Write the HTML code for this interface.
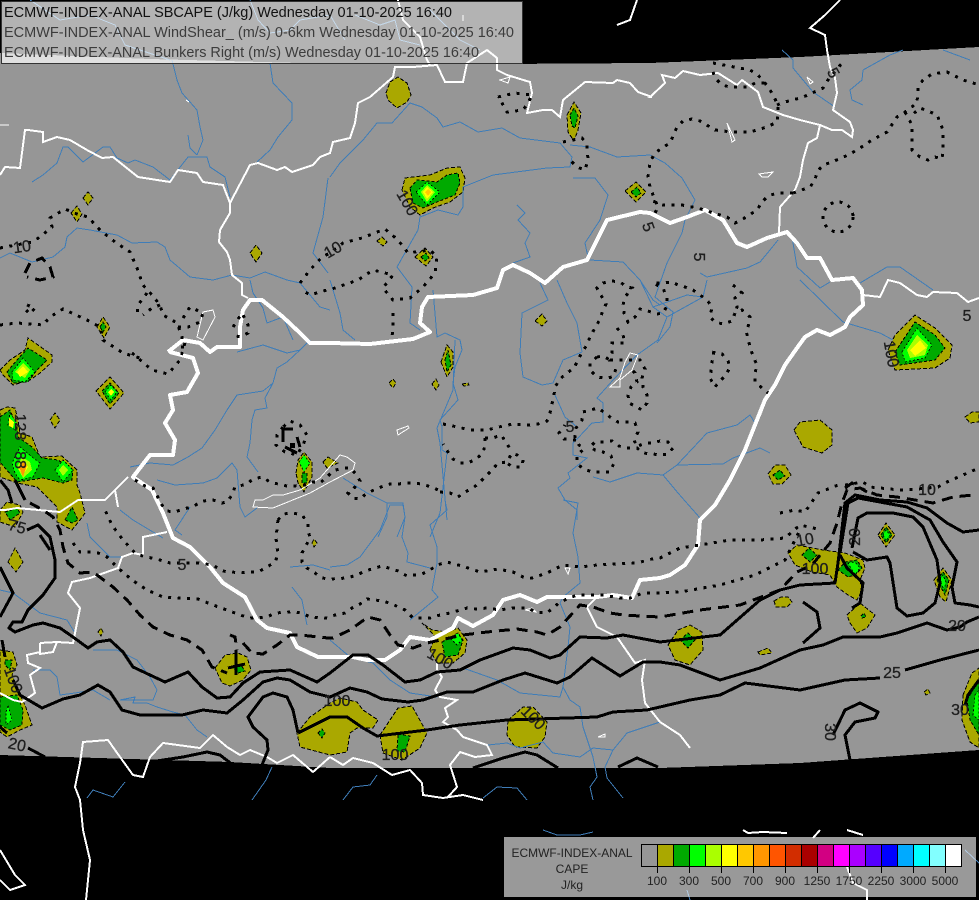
<!DOCTYPE html>
<html><head><meta charset="utf-8"><title>ECMWF-INDEX-ANAL SBCAPE</title>
<style>
html,body{margin:0;padding:0;background:#000}
svg{display:block;font-family:"Liberation Sans",sans-serif}
.r polyline{fill:none;stroke:#3f7db8;stroke-width:1}
.w polyline{fill:none;stroke:#fff;stroke-width:2}
.l polyline,.l polygon{fill:none;stroke:#fff;stroke-width:1}
.h polyline{fill:none;stroke:#fff;stroke-width:4;stroke-linejoin:round}
.d polyline{fill:none;stroke:#000;stroke-width:3;stroke-dasharray:3 6.5}
.k polyline{fill:none;stroke:#000;stroke-width:3;stroke-dasharray:11 7}
.s polyline{fill:none;stroke:#000;stroke-width:3;stroke-linejoin:round}
.o{fill:#aaa800;stroke:#000;stroke-width:1;stroke-dasharray:4 2}
.g{fill:#00aa00;stroke:#000;stroke-width:1;stroke-dasharray:3 2}
.b{fill:#00ff00;stroke:#000;stroke-width:.8;stroke-dasharray:2 2}
.m{fill:#aaff00}.y{fill:#ffff00}.a{fill:#ffc800}.n{fill:#ff9600}
.t text{font-size:16px;fill:#1e1e1e;stroke:#1e1e1e;stroke-width:.3;text-anchor:middle}
</style></head><body>
<svg width="979" height="900" viewBox="0 0 979 900" xmlns="http://www.w3.org/2000/svg" shape-rendering="crispEdges">
<rect width="979" height="900" fill="#000"/>
<polygon fill="#969696" points="0,53 150,59 300,63 500,64 650,63 800,57 979,47 979,750 800,763 660,768 330,768 230,762 0,755"/>

<!-- CAPE fills -->
<g>
<polygon class="o" points="386,93 390,82 398,77 407,83 411,95 407,102 397,108 388,100"/>
<polygon class="o" points="402,190 405,178 430,175 447,168 460,167 465,178 463,192 450,202 433,208 420,215 410,207"/>
<polygon class="g" points="410,188 417,180 437,182 447,175 458,173 460,183 455,195 437,202 423,208 413,203"/>
<polygon class="b" points="416,192 427,182 440,192 427,205"/>
<polygon class="m" points="421,192 427,185 435,192 427,202"/>
<polygon class="y" points="423,192 427,187 433,192 427,199"/>
<polygon class="a" points="425,192 428,189 431,192 428,196"/>
<polygon class="o" points="567,115 574,102 581,113 578,130 574,141 568,132"/>
<polygon class="g" points="570,115 574,108 578,116 575,128 572,126"/>
<polygon class="o" points="625,191 636,182 646,192 636,202"/>
<polygon class="g" points="631,192 637,187 641,193 636,197"/>
<polygon class="o" points="250,253 256,245 262,253 256,262"/>
<polygon class="o" points="415,257 425,248 433,257 426,266"/>
<polygon class="g" points="421,257 426,253 429,258 425,261"/>
<polygon class="o" points="377,241 382,237 387,242 383,246"/>
<polygon class="o" points="83,198 88,192 93,198 88,205"/>
<polygon class="o" points="71,213 77,206 82,214 77,222"/>
<polygon class="o" points="97,327 103,317 110,327 104,338"/>
<polygon class="g" points="100,327 103,322 106,327 103,332"/>
<polygon class="o" points="0,370 10,360 25,350 28,338 38,345 52,355 52,362 40,373 30,380 13,385 3,375"/>
<polygon class="g" points="7,372 17,360 28,348 47,360 37,370 28,382 13,383"/>
<polygon class="b" points="12,372 23,358 35,372 25,382 13,380"/>
<polygon class="m" points="15,372 23,363 30,370 25,378"/>
<polygon class="y" points="17,372 23,366 28,372 20,377"/>
<polygon class="o" points="96,391 110,377 124,393 110,409"/>
<polygon class="g" points="102,391 110,383 119,393 110,404"/>
<polygon class="b" points="105,392 111,385 117,392 111,400"/>
<polygon class="y" points="108,392 111,389 114,392 111,396"/>
<polygon class="o" points="0,410 7,407 15,408 18,420 20,433 32,437 40,457 62,456 77,470 77,485 80,493 85,513 80,520 72,530 57,522 57,507 37,487 17,483 0,477"/>
<polygon class="g" points="0,417 10,410 17,427 18,437 32,447 42,458 58,460 73,470 72,480 63,483 43,478 17,482 0,462"/>
<polygon class="b" points="10,413 17,423 15,430 8,425"/>
<polygon class="y" points="9,418 14,422 13,428 9,426"/>
<polygon class="b" points="15,473 12,463 20,447 32,457 40,463 33,477 20,480"/>
<polygon class="m" points="17,467 22,457 30,462 32,470 23,478"/>
<polygon class="y" points="18,468 23,462 28,467 23,475"/>
<polygon class="n" points="19,467 23,462 27,465 23,477"/>
<polygon class="b" points="55,470 63,460 73,470 63,482"/>
<polygon class="m" points="59,470 63,465 68,470 63,476"/>
<polygon class="g" points="65,520 72,507 78,520 72,523"/>
<polygon class="o" points="0,510 7,502 20,505 23,512 15,527 0,522"/>
<polygon class="g" points="5,512 17,508 20,513 10,520"/>
<polygon class="o" points="8,562 15,548 23,562 16,572"/>
<polygon class="o" points="0,650 13,652 17,665 12,675 20,695 25,705 32,725 20,730 7,737 0,732"/>
<polygon class="g" points="0,697 17,695 23,710 22,725 10,730 0,725"/>
<polygon class="b" points="6,712 8,705 12,720 6,725"/>
<polygon class="g" points="5,660 12,660 10,670 5,665"/>
<polygon class="o" points="215,668 225,655 238,653 247,657 251,670 243,680 230,686 222,683"/>
<polygon class="g" points="233,668 241,665 245,671 238,673"/>
<polygon class="o" points="297,733 310,717 330,703 340,698 357,702 363,710 378,720 373,728 357,728 350,733 347,752 330,755 300,747"/>
<polygon class="g" points="318,733 322,729 325,733 322,738"/>
<polygon class="o" points="380,735 398,708 412,706 427,733 420,748 402,760 383,753"/>
<polygon class="g" points="398,734 410,736 405,752 397,751"/>
<polygon class="o" points="508,720 523,707 533,707 547,722 545,737 537,748 515,747 507,735"/>
<polygon class="o" points="430,650 435,637 432,633 422,623 432,630 447,632 458,628 467,640 465,653 453,663 437,663"/>
<polygon class="g" points="442,642 458,633 463,640 458,655 445,657"/>
<polygon class="b" points="450,638 458,633 462,640 457,645"/>
<polygon class="o" points="794,430 800,422 820,420 832,430 832,445 822,453 803,447"/>
<polygon class="o" points="768,474 775,465 785,465 791,475 782,484 773,484"/>
<polygon class="g" points="773,475 780,470 785,476 778,480"/>
<polygon class="o" points="788,553 797,545 823,550 845,553 863,560 865,568 860,580 862,590 857,600 848,595 837,587 830,575 812,572 795,565"/>
<polygon class="g" points="802,555 809,548 817,555 810,562"/>
<polygon class="g" points="838,570 845,562 857,560 862,568 855,575 848,577"/>
<polygon class="b" points="848,563 855,562 860,568 855,575"/>
<polygon class="o" points="847,615 860,603 875,615 867,628 857,633 850,623"/>
<polygon class="g" points="861,616 864,613 866,617 862,618"/>
<polygon class="o" points="774,601 781,597 788,597 792,602 787,607 776,607"/>
<polygon class="o" points="878,535 886,523 895,535 886,547"/>
<polygon class="g" points="881,535 886,527 892,535 886,543"/>
<polygon class="b" points="883,535 886,530 890,535 886,541"/>
<polygon class="o" points="934,580 943,568 952,580 946,602 940,597"/>
<polygon class="g" points="937,580 943,572 949,580 945,595"/>
<polygon class="b" points="940,580 943,575 946,582 944,590"/>
<polygon class="o" points="668,645 678,630 690,625 702,632 703,650 690,665 675,660"/>
<polygon class="g" points="680,640 688,633 695,640 688,648"/>
<polygon class="o" points="888,350 895,335 915,315 935,328 952,345 950,358 935,368 895,370"/>
<polygon class="g" points="895,352 915,322 935,335 945,348 935,360 900,365"/>
<polygon class="b" points="902,352 917,328 932,345 925,358 905,362"/>
<polygon class="m" points="907,350 917,335 928,345 925,355 910,358"/>
<polygon class="y" points="910,350 920,340 926,348 915,356"/>
<polygon class="o" points="963,695 972,673 979,668 979,748 970,742 962,720"/>
<polygon class="g" points="967,700 979,680 979,735 970,720"/>
<polygon class="b" points="975,695 979,690 979,720 973,715"/>
<polygon class="o" points="535,321 542,314 547,321 542,326"/>
<polygon class="o" points="441,362 447,345 453,352 453,367 447,377"/>
<polygon class="g" points="445,360 448,350 451,365 447,372"/>
<polygon class="o" points="389,383 393,379 396,383 393,388"/>
<polygon class="o" points="432,384 436,379 439,385 436,390"/>
<polygon class="o" points="462,384 468,383 469,385 464,386"/>
<polygon class="o" points="296,473 298,460 304,452 312,462 312,477 304,492 298,483"/>
<polygon class="b" points="299,462 304,455 310,463 304,472"/>
<polygon class="g" points="302,473 307,473 307,483 302,483"/>
<polygon class="o" points="323,462 328,457 338,463 327,468"/>
<polygon class="o" points="312,543 314,539 317,543 314,547"/>
<polygon class="o" points="98,632 101,628 103,632 101,636"/>
<polygon class="o" points="50,420 55,413 60,420 55,428"/>
<polygon class="o" points="965,417 972,412 979,412 979,422 970,423"/>
<polygon class="o" points="758,652 768,648 772,653 760,655"/>
<polygon class="o" points="924,692 928,689 930,693 926,695"/>
</g>

<!-- rivers -->
<g class="r">
<polyline points="172,60 177,80 182,93 197,110 200,127 203,140 197,155"/>
<polyline points="188,135 190,148 197,155"/>
<polyline points="270,63 273,83 292,103 292,120 278,137 270,150 257,162"/>
<polyline points="32,182 43,175 57,163 63,147 68,147 83,162 103,147 110,147 117,158 128,163 135,160 153,167 170,180 188,157 207,157 210,167 225,177 230,197"/>
<polyline points="0,258 10,253 32,262 53,257 65,247 67,237 77,228 90,230 117,235 132,243 157,242 165,247 170,260 190,277 213,280 232,275 250,278 265,272 287,280 300,283 320,307 330,310"/>
<polyline points="250,280 253,293 263,308 267,323 283,317 293,340"/>
<polyline points="237,352 263,345 287,353 300,350 310,340"/>
<polyline points="328,178 323,217 313,253 328,273"/>
<polyline points="330,177 340,163 363,140 377,123 392,123 410,103 422,107 437,118 443,127 460,122 478,132 502,128 520,138 560,143 572,157 570,167 547,168 493,175 463,187 463,207 458,215 438,210 420,217 418,230 397,267 412,287 410,323 420,330"/>
<polyline points="570,145 590,147 617,157 650,155 665,163 682,178 695,200 685,220 682,233 667,263 655,297 673,312 670,327 657,343"/>
<polyline points="573,178 595,178 608,195 600,220 585,243 588,257"/>
<polyline points="517,205 525,213 518,220 530,233 525,243 530,257 513,263"/>
<polyline points="590,260 623,262 640,280 653,300 660,305"/>
<polyline points="540,283 548,300 522,313 520,353 523,377 542,385 553,383 563,360 582,352"/>
<polyline points="557,280 567,303 577,323 582,352"/>
<polyline points="330,280 340,313 343,330 355,340"/>
<polyline points="433,290 437,337 445,333 460,340 462,350 455,367 453,383 458,400 440,420 442,427 442,450 447,453 440,513 430,537"/>
<polyline points="455,340 453,390 437,428 440,443 447,520"/>
<polyline points="707,280 703,297 667,317 658,340 637,355 613,380 597,398 603,403 603,422 592,423 578,438 573,443 573,455 587,458 568,473 570,478 558,488 565,500 577,510 577,520"/>
<polyline points="555,395 565,417 577,427"/>
<polyline points="640,280 653,307 667,317"/>
<polyline points="653,307 687,295 703,297"/>
<polyline points="593,477 610,482 637,473 663,475 677,465 707,433 737,425 750,415 755,423"/>
<polyline points="663,475 678,493 700,518"/>
<polyline points="677,465 723,464 733,458 760,448 770,453"/>
<polyline points="700,273 707,277 747,268 760,262 770,250 778,240"/>
<polyline points="792,237 797,267 820,288 830,282"/>
<polyline points="800,280 843,322 880,333 893,340"/>
<polyline points="860,283 887,267 900,267 933,290"/>
<polyline points="782,50 793,60 793,68 813,92 835,107"/>
<polyline points="863,70 862,80 850,90 852,100 863,105"/>
<polyline points="863,70 890,55 903,50"/>
<polyline points="943,50 970,60"/>
<polyline points="120,510 133,520 163,538"/>
<polyline points="87,523 90,537 110,557 123,557"/>
<polyline points="0,590 13,593 40,613 67,620 75,633"/>
<polyline points="93,650 117,650 137,660 150,677 157,690 153,700 120,700 135,697 133,703 147,703 157,707 173,712 185,715 197,730 207,737"/>
<polyline points="33,670 50,670 57,677 60,695 75,693 93,690 110,700"/>
<polyline points="125,782 113,797 93,790 87,798"/>
<polyline points="272,767 266,780 252,800"/>
<polyline points="292,587 302,600 307,625"/>
<polyline points="290,567 313,565 330,570"/>
<polyline points="190,507 175,530 182,535"/>
<polyline points="173,465 188,457 202,448 215,430 227,410 237,395 263,391 273,383"/>
<polyline points="130,467 150,463 173,465"/>
<polyline points="287,362 277,368 273,383 265,398 267,408 255,410 252,420 250,443 247,457 258,472"/>
<polyline points="300,350 287,362"/>
<polyline points="157,480 175,485 203,483 217,478 232,463 237,470 240,507 245,517 257,508"/>
<polyline points="343,478 367,493 387,503 403,503 405,517 397,537"/>
<polyline points="387,503 387,517 378,537"/>
<polyline points="330,567 347,565 360,557 380,530 390,505 403,505 405,517 402,537 408,553 407,562 430,568"/>
<polyline points="445,500 447,510 430,525 437,547 437,563 432,590 438,597 410,620"/>
<polyline points="563,500 578,503 573,533 578,557 580,583 563,597 560,603 570,627 568,647 563,687 570,700 580,707 583,727 593,757 597,777 590,787 593,800"/>
<polyline points="330,640 350,657 373,663 390,680 410,693 437,697"/>
<polyline points="463,668 497,680 520,693 560,697 563,687"/>
<polyline points="488,745 507,743 520,748 543,742 553,753 580,757 593,748 613,750 627,733 660,722"/>
<polyline points="613,750 605,767 607,778 623,798"/>
<polyline points="343,800 353,787 370,785 377,775"/>
<polyline points="483,798 497,787 517,788 527,800"/>
<polyline points="543,830 557,835 567,835 580,835 593,832"/>
<polyline points="965,850 979,863"/>
<polyline points="687,890 690,900"/>
<polyline points="250,0 258,20 270,33 290,30 300,20 330,15 345,40"/>
<polyline points="30,0 60,20 90,15 115,25 125,45 170,60"/>
<polyline points="355,15 380,25 395,20 400,40 420,45"/>
<polyline points="430,10 460,40 480,50"/>
</g>

<!-- lakes / thin -->
<g class="l">
<polygon points="253,507 255,500 263,500 273,495 283,495 300,490 320,478 340,455 347,457 355,463 353,470 330,482 310,493 273,508"/>
<polygon points="397,430 408,426 409,428 398,435"/>
<polygon points="203,312 213,310 215,317 203,340 197,337"/>
<polygon points="727,123 735,140 732,142 729,130"/>
<polygon points="759,174 773,172 768,177 762,177"/>
<polygon points="807,77 813,82 810,84"/>
<polygon points="610,387 620,378 625,362 630,353 638,355 632,370 620,380 620,387"/>
<polygon points="565,568 570,568 568,574"/>
<polygon points="525,610 532,608 536,612"/>
<polygon points="598,737 605,734 605,737"/>
<polygon points="500,80 510,77 508,83"/>
<polyline points="0,125 9,125"/>
<polyline points="463,15 463,21"/>
<polyline points="186,100 189,102"/>
</g>

<!-- thin borders -->
<g class="w">
<polyline points="0,175 5,167 20,168 25,130 28,130 43,132 43,142 57,137 70,140 87,150 102,158 113,157 138,177 170,182 178,170 197,173 203,182 223,185 230,203 250,165 258,163 277,170 285,167 292,172 313,165 320,157 330,153 333,142 350,138 355,123 358,103 370,97 393,77 395,67 413,67 437,65 445,82 463,82 467,63 487,50 497,58 497,70 507,75 530,82 532,93 527,113 543,110 552,110 560,117 563,100 585,82 613,83 617,80 630,83 638,92 652,97 650,97 665,83 662,75 675,78 683,71 700,75 718,73 737,85 742,80 758,92 763,107 783,115 800,120 820,125 832,130 842,130 852,137 853,130 850,122 833,110 837,93 835,78 830,67 827,50 825,35 810,28 825,15 840,0"/>
<polyline points="398,0 403,20 420,37 427,60 430,65"/>
<polyline points="230,203 230,213 220,230 219,242 227,252 230,260 232,275 242,283 242,295 248,298"/>
<polyline points="820,125 817,138 808,143 803,160 800,177 795,190 780,207 779,233"/>
<polyline points="863,295 880,297 888,280 900,283 917,295 927,297 933,292 957,293 968,302 979,298"/>
<polyline points="597,597 587,607 597,627 617,637 635,663 645,660 642,680 645,703 660,722 680,735 690,748"/>
<polyline points="437,663 437,670 442,677 435,690 440,697 457,700 445,708 448,717 443,722 457,730 463,737 487,745 492,755 475,757 460,752 450,765 457,787 447,798"/>
<polyline points="330,757 343,765 353,758 373,763 392,775 410,770 422,783 423,795 443,798 463,795 483,800"/>
<polyline points="330,757 313,772 293,755 277,763 267,757 250,750 240,755 227,747 213,735 200,748 163,743 150,757 143,777 133,775 115,750 108,740 83,742 80,763 75,787 80,800 83,830 90,860 86,900"/>
<polyline points="0,510 5,510 17,508 60,512 78,500 105,500 115,490 128,477"/>
<polyline points="115,490 118,507"/>
<polyline points="167,532 143,537 143,555 133,553 122,557 118,568 90,578 72,582 68,593 80,608 75,633 73,643 57,642"/>
<polyline points="40,652 27,655 28,663 40,668 30,675 35,693 22,702 13,700 0,693"/>
<polyline points="40,643 57,642 53,652 40,654 40,643"/>
<polyline points="743,830 748,833 763,832 787,833"/>
<polyline points="820,830 813,838"/>
<polyline points="847,830 863,835"/>
<polyline points="847,867 853,883 867,890 867,900"/>
<polyline points="617,25 630,20 637,0"/>
<polyline points="0,850 15,875 25,885 10,890 0,880"/>
</g>

<!-- Hungary -->
<g class="h">
<polyline points="168,352 183,340 200,343 210,352 217,347 240,347 240,327 243,310 250,300 262,300 283,317 300,333 310,343 330,343 370,344 413,339 430,332 420,323 422,307 428,297 473,295 497,288 503,270 513,265 530,273 545,283 563,267 587,260 597,240 607,220 640,212 650,213 670,223 687,217 705,210 723,220 737,243 747,247 767,238 787,232 797,243 807,258 820,258 832,280 853,278 862,290 863,305 850,317 845,327 830,335 817,330 805,337 797,348 785,365 775,385 765,400 755,425 745,450 730,480 715,505 700,520 698,545 685,565 670,575 660,578 640,580 632,598 613,595 597,597 567,597 547,597 537,602 520,595 503,600 493,615 473,626 458,618 453,628 430,640 410,637 400,650 385,660 367,660 353,657 330,657 318,657 297,647 290,633 267,628 257,620 245,597 223,583 210,567 190,547 173,538 163,513 152,490 133,477 150,455 173,455 175,440 165,423 173,410 170,395 187,392 198,373 193,358 170,352"/>
</g>

<!-- dotted -->
<g class="d">
<polyline points="0,248 32,242 40,237 52,227 50,218 65,209 77,214 88,217 100,230 115,242 130,252 137,268 143,285 152,295 160,305 163,315 177,323 182,337 183,353"/>
<polyline points="0,325 17,323 43,325 50,317 63,309 87,320 100,327 103,340 123,353 140,358"/>
<polyline points="132,353 152,370 168,374 180,360 185,343"/>
<polyline points="27,305 35,308 30,314 25,309"/>
<polyline points="147,293 138,305 137,317"/>
<polyline points="160,305 152,308 143,315"/>
<polyline points="183,318 190,307 203,313 200,322 188,327 177,327"/>
<polyline points="233,327 242,313 248,325 248,333 240,337 233,335"/>
<polyline points="300,283 310,270 322,257 330,253 343,243 362,238 385,229 398,240 408,253 430,250 437,257 435,273 423,287 410,298 393,300 383,288 393,275 373,270 358,280 335,288 327,290 310,295 302,290"/>
<polyline points="393,313 393,327 392,337"/>
<polyline points="498,97 515,93 532,95 528,103 523,110 507,112 502,103 498,97"/>
<polyline points="563,142 582,138 587,145 588,160 585,170 577,167 570,160"/>
<polyline points="713,63 750,70 758,75 765,83 772,93 778,105 778,113 777,122 767,127 750,132 732,132 715,130 700,121 692,119 683,121 677,127 670,143 662,148 655,153 650,162 648,177 650,187 655,200 658,207 653,217"/>
<polyline points="713,72 715,78 722,85 730,87 740,87 748,87 755,83 765,83"/>
<polyline points="777,105 785,102 800,98 808,95 823,88 828,80 842,63"/>
<polyline points="793,193 777,193 768,196 762,202 757,210 743,219 735,223 727,217 713,213 705,210 692,207 682,205 672,205 663,205 650,200"/>
<polyline points="793,193 810,187 815,180 817,172 823,165 832,162 848,155 857,150 872,140 887,132 897,117 905,112 917,103 918,87 923,80 932,74 947,72 963,80 973,83 979,85"/>
<polyline points="905,112 912,125 912,142 912,150 920,157 928,160 935,157 942,159 943,150 943,140 943,130 940,122 937,115 928,111 920,108 912,115"/>
<circle cx="838" cy="217" r="15" fill="none" stroke="#000" stroke-width="3" stroke-dasharray="3 6"/>
<polyline points="440,492 450,493 458,497 465,492 473,488 480,482 492,470 498,463 507,462 512,453 517,455 523,460 522,467 513,467 505,462"/>
<polyline points="485,438 485,445 483,453 476,459 468,463 460,463 453,459 448,452 443,444"/>
<polyline points="485,438 493,438 501,435 506,442 510,449"/>
<polyline points="443,424 453,426 470,430 487,430 503,426 513,424 530,425 538,424 547,421 550,413 552,404 554,395 555,387 560,379 567,373 574,368 578,360 582,352 587,345 590,337 595,328 599,321 602,313 606,304 602,297 597,288 603,283 612,281 620,282 627,287 632,288 625,297 623,305 624,313 628,322 635,317 640,309 648,311 657,314 663,313 667,306 667,298 663,288 653,283 662,283 672,282 678,285 685,287 693,290 700,295 707,300 712,307 710,317 715,322 723,324 732,321 735,313 742,310 750,317 748,327 746,331 748,338 750,347 753,356 757,365 755,373 755,382 761,387 768,393"/>
<polyline points="733,285 742,293 735,298 737,307 735,313"/>
<polyline points="617,328 623,335 625,343 612,343 612,353 610,360 617,360 622,360 635,360 640,360 645,369 642,378 643,387 647,395 647,403 642,410 635,406 629,403 628,395 631,387 637,382 635,373 630,368"/>
<polyline points="597,357 603,356 610,360"/>
<polyline points="597,357 590,363 590,370 597,377 604,378 613,377 617,366"/>
<polyline points="583,412 598,408 605,413 610,417 618,422 627,422 635,423 638,432 634,440 637,447 644,443 652,443 660,441 668,442 673,448 668,454 660,455 653,454 643,453 637,448 627,448 619,446 612,441 603,442 595,442 590,447 595,450 603,452 611,456 614,463 610,472 601,472 592,472 584,469 577,464 577,455 584,449 579,445 575,437 576,428 582,420 583,412"/>
<polyline points="576,440 564,439 559,433 565,425"/>
<polyline points="712,353 722,354 728,361 730,367 726,375 719,382 715,387 710,378 711,371 712,362 715,346"/>
<polyline points="135,480 145,486 153,488 162,505 167,511 175,512 183,509 192,507 203,501 213,500 222,503 227,502 232,495 235,487 247,484 253,479 262,477 270,482 278,484 287,486 293,486 305,485 313,482 320,483 327,477 333,471 342,468 350,468 356,474 360,481 355,487 348,493 353,498 360,499 367,493 381,487 390,484 398,484 407,483 416,483 425,485 434,488 442,492"/>
<polyline points="278,520 276,538 278,555 275,562 267,567 258,572 248,572 240,573 232,572 222,571 213,565 198,563 170,563 160,560 152,558 145,557 135,553 123,540 117,532 112,525 105,510"/>
<polyline points="278,520 283,514 293,513 302,515 308,523 308,530 310,538 302,553 302,562 307,568 315,573 322,578 330,579 347,578 357,575 365,571 382,566 398,571 407,576 422,574 430,570 437,565 447,562 462,566 480,572 498,569 513,572 523,577 532,578 547,573 563,565 580,567 597,565 617,564 637,563 652,559 660,558 680,548 700,545 730,540 760,540 785,538 800,525 822,530"/>
<polyline points="73,543 80,552 88,552 98,553 107,557 118,568 132,580 147,590 163,597 180,598 198,599 213,605 227,610 240,615 250,618 267,617 275,613 292,612 302,613 310,617 328,618 335,615 345,613 352,608 360,604 367,599 375,600 383,601 392,604 405,610 413,618 430,618 440,615 450,613 467,608 477,609 487,608 500,610 512,608 527,608 537,612 547,613 553,608 560,602 577,595 593,595 603,595 620,598 630,598 643,593 660,593 680,592 720,585 755,575 785,560 800,530"/>
<polyline points="780,513 795,510 805,512 818,493 838,485"/>
<polyline points="845,485 863,482 870,487 900,490 907,490 938,487 947,482 979,468"/>
<polyline points="283,427 277,435 276,445 285,452 297,455 303,445 307,435 300,425 290,421 283,427"/>
</g>

<!-- dashed -->
<g class="k">
<polyline points="30,503 43,510 53,517 60,530 63,547 68,563 80,573 93,572 113,587 127,600 140,615 153,627 170,635 187,640 202,650 212,667 227,673"/>
<polyline points="230,635 235,637 237,650"/>
<polyline points="243,643 252,653 263,654 277,645 290,635 300,635 328,638 333,638 350,630 368,617 380,620 390,635 398,645 413,648 427,643 463,635 487,632 517,629 537,632 547,635 560,627 580,605 593,607 610,613 623,615 640,616 660,617 700,610 740,605 780,590 797,572 812,565 830,543 837,523 842,503 847,490 860,488 877,495 897,497 933,503 953,497 973,495"/>
<polyline points="25,273 30,263 42,258 50,267 53,277 40,280 27,277"/>
<polyline points="845,488 852,483 867,492"/>
</g>
<path d="M283 442V429H293M297 437L300 447M285 447L297 453" fill="none" stroke="#000" stroke-width="3"/>
<rect x="290" y="443" width="5" height="5" fill="#000"/>
<path d="M236 650V675M228 668L245 664" fill="none" stroke="#000" stroke-width="3"/>

<!-- solid -->
<g class="s">
<polyline points="27,530 38,525 50,537 55,560 55,578 43,595 28,610 22,622 13,622 9,628 15,632 33,625 43,623 60,628 73,637 88,648 97,642 110,640 123,652 133,667 150,675 165,682 188,672 202,687 217,698 230,697 243,683 260,672 290,670 317,682 330,673 353,655 368,655 383,665 405,682 420,680 437,672 460,670 480,660 513,648 530,650 550,658 560,655 580,637 607,638 623,635 660,642 720,635 760,600 780,590 800,585 835,583 838,563 845,503 855,495 880,500 907,502 927,508 947,523 963,532 979,530"/>
<polyline points="840,553 848,503 858,498 907,507 930,520 943,542 957,562 952,587 955,603 970,605 979,607"/>
<polyline points="852,548 858,518 867,513 893,513 913,517 923,527 937,560 940,583 935,603 923,613 907,616 897,608 890,563 887,557 867,560 853,552"/>
<polyline points="840,555 847,568 863,583 860,603 852,608"/>
<polyline points="803,602 817,612 820,628 803,643"/>
<polyline points="13,680 20,695 42,708 63,699 80,695 98,685 110,692 122,710 140,715 182,715 203,710 227,713 243,700 263,682 277,678 290,680 310,692 330,697 350,688 367,692 382,699 408,702 423,700 447,692 473,692 503,680 525,673 557,683 570,677 592,658 620,676 643,662 660,662 680,665 720,680 760,668 800,650 823,645 843,637 880,637 897,633 927,623 947,630 960,627 967,622 979,617"/>
<polyline points="298,733 293,710 287,697 273,693 263,697 248,717 253,727 267,740 268,750 262,765"/>
<polyline points="298,733 330,717 347,717 363,728 377,736 427,730 460,725 507,720 597,717 613,712 647,710 690,700 720,695 745,683 800,690 845,680 880,678"/>
<polyline points="905,670 940,660 979,650"/>
<polyline points="0,567 13,593 0,617"/>
<polyline points="2,640 5,657"/>
<polyline points="0,727 7,733"/>
<polyline points="28,748 45,757"/>
<polyline points="150,762 183,757 207,752 220,755 233,765"/>
<polyline points="473,768 503,758 525,752 537,755 558,768"/>
<polyline points="618,767 637,758 658,767"/>
<polyline points="833,735 845,710 860,703 878,712 875,718 855,722 845,735 850,760"/>
<polyline points="979,680 968,695 965,705"/>
<polyline points="0,480 8,490 12,503"/>
<polyline points="15,480 25,500"/>
<polyline points="40,535 50,550"/>
</g>

<!-- contour labels -->
<g class="t">
<text x="22" y="252" transform="rotate(-8 22 247)">10</text>
<text x="333" y="255" transform="rotate(-30 333 250)">10</text>
<text x="833" y="78" transform="rotate(60 833 73)">5</text>
<text x="648" y="232" transform="rotate(70 648 227)">5</text>
<text x="699" y="262" transform="rotate(90 699 257)">5</text>
<text x="967" y="321">5</text>
<text x="570" y="432">5</text>
<text x="182" y="570">5</text>
<text x="407" y="208" transform="rotate(60 407 203)">100</text>
<text x="891" y="359" transform="rotate(80 891 354)">100</text>
<text x="337" y="706">100</text>
<text x="395" y="760">100</text>
<text x="533" y="723" transform="rotate(45 533 718)">100</text>
<text x="815" y="574">100</text>
<text x="440" y="664" transform="rotate(30 440 659)">100</text>
<text x="17" y="532" transform="rotate(15 17 527)">75</text>
<text x="855" y="542" transform="rotate(-90 855 537)">20</text>
<text x="927" y="495">10</text>
<text x="957" y="631">20</text>
<text x="892" y="678">25</text>
<text x="960" y="715">30</text>
<text x="830" y="737" transform="rotate(90 830 732)">30</text>
<text x="17" y="750" transform="rotate(12 17 745)">20</text>
<text x="13" y="685" transform="rotate(70 13 680)">100</text>
<text x="20" y="432" transform="rotate(90 20 427)">128</text>
<text x="20" y="465" transform="rotate(90 20 460)">88</text>
<text x="805" y="545" transform="rotate(-10 805 540)">10</text>
</g>

<!-- title box -->
<rect x="1.5" y="1.5" width="521" height="62" fill="rgba(255,255,255,.7)" stroke="#333" stroke-width="1"/>
<g shape-rendering="auto" font-size="14.5">
<text x="4" y="17" fill="#111" textLength="448" lengthAdjust="spacingAndGlyphs">ECMWF-INDEX-ANAL SBCAPE (J/kg) Wednesday 01-10-2025 16:40</text>
<text x="4" y="37" fill="#3c3c3c" textLength="510" lengthAdjust="spacingAndGlyphs">ECMWF-INDEX-ANAL WindShear_ (m/s) 0-6km Wednesday 01-10-2025 16:40</text>
<text x="4" y="57" fill="#3c3c3c" textLength="475" lengthAdjust="spacingAndGlyphs">ECMWF-INDEX-ANAL Bunkers Right (m/s) Wednesday 01-10-2025 16:40</text>
</g>

<!-- legend -->
<rect x="504" y="837" width="472" height="60" fill="rgba(255,255,255,.6)"/>
<g stroke="#000" stroke-width="1">
<rect x="641.5" y="844.5" width="16" height="22" fill="#969696"/>
<rect x="657.5" y="844.5" width="16" height="22" fill="#aaa800"/>
<rect x="673.5" y="844.5" width="16" height="22" fill="#00aa00"/>
<rect x="689.5" y="844.5" width="16" height="22" fill="#00ff00"/>
<rect x="705.5" y="844.5" width="16" height="22" fill="#aaff00"/>
<rect x="721.5" y="844.5" width="16" height="22" fill="#ffff00"/>
<rect x="737.5" y="844.5" width="16" height="22" fill="#ffc800"/>
<rect x="753.5" y="844.5" width="16" height="22" fill="#ff9600"/>
<rect x="769.5" y="844.5" width="16" height="22" fill="#ff5500"/>
<rect x="785.5" y="844.5" width="16" height="22" fill="#d22d00"/>
<rect x="801.5" y="844.5" width="16" height="22" fill="#aa0000"/>
<rect x="817.5" y="844.5" width="16" height="22" fill="#d20082"/>
<rect x="833.5" y="844.5" width="16" height="22" fill="#ff00ff"/>
<rect x="849.5" y="844.5" width="16" height="22" fill="#aa00ff"/>
<rect x="865.5" y="844.5" width="16" height="22" fill="#5500ff"/>
<rect x="881.5" y="844.5" width="16" height="22" fill="#0000ff"/>
<rect x="897.5" y="844.5" width="16" height="22" fill="#00aaff"/>
<rect x="913.5" y="844.5" width="16" height="22" fill="#00ffff"/>
<rect x="929.5" y="844.5" width="16" height="22" fill="#82ffff"/>
<rect x="945.5" y="844.5" width="16" height="22" fill="#ffffff"/>
<path d="M657.5 866V873M689.5 866V873M721.5 866V873M753.5 866V873M785.5 866V873M817.5 866V873M849.5 866V873M881.5 866V873M913.5 866V873M945.5 866V873" fill="none"/>
</g>
<g shape-rendering="auto" font-size="12" fill="#222" text-anchor="middle">
<text x="572" y="857" textLength="121" lengthAdjust="spacingAndGlyphs">ECMWF-INDEX-ANAL</text>
<text x="572" y="873">CAPE</text>
<text x="572" y="889">J/kg</text>
<text x="657" y="885">100</text>
<text x="689" y="885">300</text>
<text x="721" y="885">500</text>
<text x="753" y="885">700</text>
<text x="785" y="885">900</text>
<text x="817" y="885">1250</text>
<text x="849" y="885">1750</text>
<text x="881" y="885">2250</text>
<text x="913" y="885">3000</text>
<text x="945" y="885">5000</text>
</g>
</svg>
</body></html>
